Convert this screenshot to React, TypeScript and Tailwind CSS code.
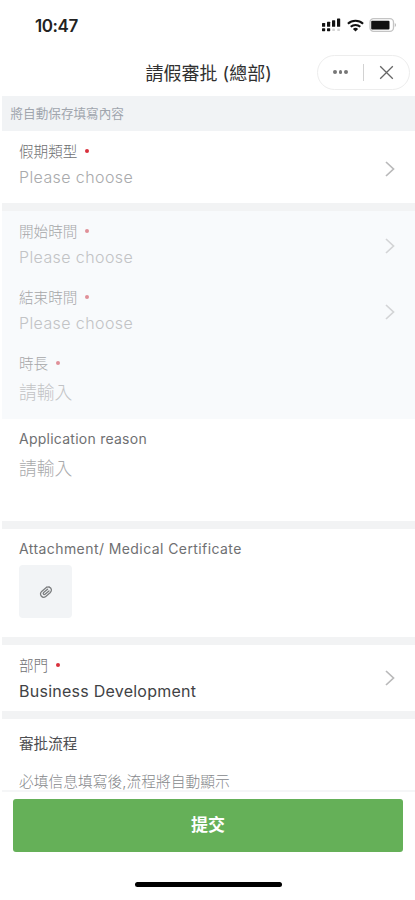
import React from 'react';
import clsx from 'clsx';

interface FieldProps {
  label: string;
  value: string;
  required?: boolean;
  disabled?: boolean;
  filled?: boolean;
  arrow?: string;
  className?: string;
}

const hasLatin = (text: string) => /[a-z]/.test(text);

const Chevron = ({ disabled, className }: { disabled?: boolean; className?: string }) => (
  <svg
    className={clsx('mr-[19px] h-4 w-3 shrink-0', disabled ? 'text-[#d3d4d6]' : 'text-[#b9b9ba]', className)}
    viewBox="0 0 12 16"
    fill="none"
    stroke="currentColor"
    strokeWidth="1.7"
  >
    <path d="M2 1l7.5 7L2 15" />
  </svg>
);

const Field = ({ label, value, required, disabled, filled, arrow, className }: FieldProps) => (
  <div className={clsx('flex items-start pl-[17px]', className)}>
    <div className="flex-1">
      <div
        className={clsx(
          'flex h-5 items-center whitespace-nowrap leading-5',
          disabled ? 'text-[#a6a7a9]' : 'text-[#6f7072]',
          hasLatin(label) ? 'text-[14px] tracking-[0.25px]' : 'text-[14.6px] font-light',
        )}
      >
        <span className={clsx(!hasLatin(label) && 'pt-[2px]')}>{label}</span>
        {required && (
          <span className={clsx('mb-px ml-2 size-1 rounded-full', disabled ? 'bg-[#e08f98]' : 'bg-[#d9303c]')} />
        )}
      </div>
      <div
        className={clsx(
          'h-6 whitespace-nowrap leading-6',
          hasLatin(value) ? 'mt-1 text-[16px]' : 'mt-2 text-[17.8px] font-light',
          hasLatin(value) && (filled ? 'tracking-[0.25px]' : 'font-light tracking-[0.4px]'),
          filled ? 'text-[#414245]' : disabled ? 'text-[#c2c3c5]' : 'text-[#a9aaac]',
        )}
      >
        {value}
      </div>
    </div>
    {arrow && <Chevron disabled={disabled} className={arrow} />}
  </div>
);

const Divider = () => <div className="h-2 shrink-0 bg-[#f2f3f4]" />;

const StatusBar = () => (
  <div className="flex h-12 items-start justify-between pt-[15px] pr-[18px] pl-[33px]">
    <span className="text-[17px] leading-[22px] font-semibold tracking-[-0.4px] text-[#222]">10:47</span>
    <div className="flex items-center gap-[5px] pt-[3px]">
      <svg className="h-[14px] w-5" viewBox="0 0 20 14" fill="#111">
        <rect x="0" y="5" width="3.2" height="3.8" rx=".6" />
        <rect x="5" y="3.7" width="3.2" height="5.1" rx=".6" />
        <rect x="10" y="2.2" width="3.2" height="6.6" rx=".6" />
        <rect x="15" y="0.5" width="3.2" height="8.3" rx=".6" />
        <rect x="0" y="10.2" width="3.2" height="3" rx=".6" />
        <rect x="5" y="10.2" width="3.2" height="3" rx=".6" />
        <rect x="10.3" y="10.4" width="2.6" height="2.6" rx=".6" fill="#d4d4d4" />
        <rect x="15.3" y="10.4" width="2.6" height="2.6" rx=".6" fill="#d4d4d4" />
      </svg>
      <svg className="h-[13px] w-[17px]" viewBox="0 0 17 13" fill="none" stroke="#111" strokeWidth="2">
        <path d="M.9 4.7a11 11 0 0 1 15.2 0" />
        <path d="M3.7 7.8a7 7 0 0 1 9.6 0" />
        <path d="M8.5 12.4L5.9 9.9a3.8 3.8 0 0 1 5.2 0z" fill="#111" stroke="none" />
      </svg>
      <svg className="h-[14px] w-7" viewBox="0 0 28 14">
        <rect x="1" y=".7" width="23.5" height="12.6" rx="3.6" fill="#fff" stroke="#c4c4c4" strokeWidth="1.3" />
        <rect x="2.2" y="2.7" width="18.3" height="8.8" rx="1" fill="#111" />
        <path d="M25.8 5c1.5.5 1.5 3.6 0 4.1z" fill="#b5b5b5" />
      </svg>
    </div>
  </div>
);

const Header = () => (
  <div className="flex h-12 items-center pr-[5px] pl-[143.5px]">
    <h1 className="flex-1 pt-[3px] text-[18px] leading-6 whitespace-nowrap text-[#303030]">請假審批 (總部)</h1>
    <div className="flex h-[35px] w-[93px] items-center rounded-full border border-[#ededed] bg-white">
      <div className="flex flex-1 items-center justify-center gap-[2px]">
        <span className="size-[3.5px] rounded-full bg-[#777]" />
        <span className="size-[3.5px] rounded-full bg-[#777]" />
        <span className="size-[3.5px] rounded-full bg-[#777]" />
      </div>
      <div className="h-[17px] w-px bg-[#d2d2d2]" />
      <div className="flex flex-1 items-center justify-center">
        <svg className="size-[15px]" viewBox="0 0 15 15" fill="none" stroke="#666" strokeWidth="1.3">
          <path d="M1.2 1.2l12.6 12.6M13.8 1.2L1.2 13.8" />
        </svg>
      </div>
    </div>
  </div>
);

// small two-loop clip, tilted inside the upload tile
const ClipIcon = () => (
  <svg className="size-4" viewBox="0 0 16 16" fill="none" stroke="#7b7d7f" strokeWidth="1.3" strokeLinecap="round">
    <g transform="rotate(-40 8 8)">
      <path d="M11.5 4.8H5a3.2 3.2 0 0 0 0 6.4h6a3.2 3.2 0 0 0 2.6-4.9" />
      <path d="M11 6.9H5.8a1.1 1.1 0 0 0 0 2.2H11" />
      <path d="M11.5 4.8a3.2 3.2 0 0 1 2.1 1.5" />
    </g>
  </svg>
);

export default function App() {
  return (
    <div className="flex h-[900px] w-[415px] flex-col overflow-hidden bg-white pl-[2px] font-['Inter','Noto_Sans_CJK_TC',sans-serif]">
      <StatusBar />
      <Header />

      <div className="h-[35px] shrink-0 bg-[#f1f3f5] pl-[8.5px] text-[12.6px] leading-[36px] text-[#a0a5ad]">
        將自動保存填寫內容
      </div>

      <Field className="h-[72px] pt-[10px]" label="假期類型" value="Please choose" required arrow="mt-5" />
      <Divider />
      <div className="h-[208px] shrink-0 bg-[#f8fafc] pt-[10px]">
        <Field className="h-[66px]" label="開始時間" value="Please choose" required disabled arrow="mt-[17px]" />
        <Field className="h-[66px]" label="結束時間" value="Please choose" required disabled arrow="mt-[17px]" />
        <Field className="h-[66px]" label="時長" value="請輸入" required disabled />
      </div>
      <Field className="h-[102px] pt-[10px]" label="Application reason" value="請輸入" />
      <Divider />

      <div className="h-[108px] shrink-0 pt-[10px] pl-[17px]">
        <div className="text-[14px] leading-5 tracking-[0.42px] text-[#6f7072]">Attachment/ Medical Certificate</div>
        <div className="mt-[6px] flex size-[53px] items-center justify-center rounded-[4px] bg-[#f2f4f6]">
          <ClipIcon />
        </div>
      </div>
      <Divider />

      <Field className="h-[66px] pt-[10px]" label="部門" value="Business Development" required filled arrow="mt-[15px]" />
      <Divider />

      <div className="h-[73px] shrink-0 overflow-hidden border-b-2 border-[#f5f6f7] pt-[15px] pl-[17px] text-[14.6px] leading-5 whitespace-nowrap">
        <div className="text-[#4c4d50]">審批流程</div>
        <div className="mt-[18px] text-[14.75px] font-light text-[#86888b]">必填信息填寫後,流程將自動顯示</div>
      </div>

      <div className="pt-[7px] pr-3 pl-[11px]">
        <button className="block h-[53px] w-full rounded-[3px] bg-[#65b058] pt-px text-[17px] font-bold text-white">
          提交
        </button>
      </div>
      <div className="mt-[30px] ml-[133px] h-[5px] w-[147px] rounded-full bg-black" />
    </div>
  );
}
